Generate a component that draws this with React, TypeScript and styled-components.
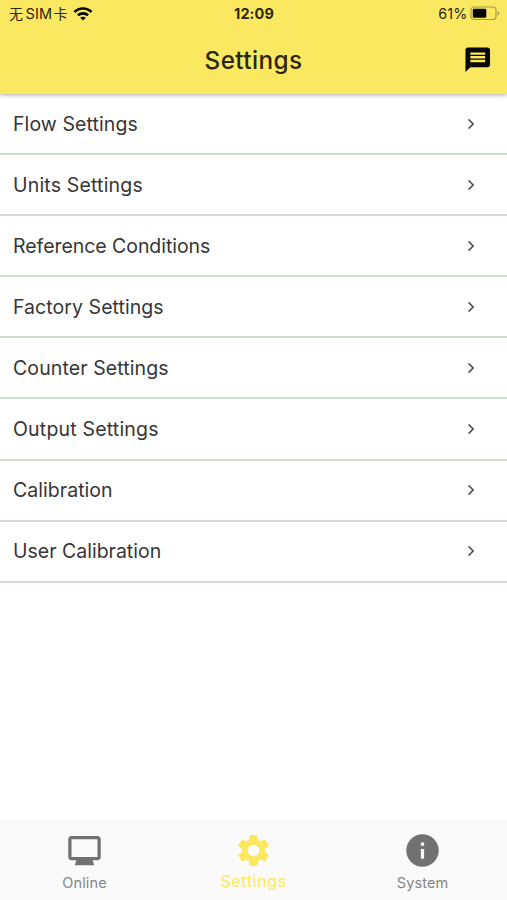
import React from "react";
import styled, { createGlobalStyle } from "styled-components";

const GlobalStyle = createGlobalStyle`
  * { box-sizing: border-box; }
  html, body { margin: 0; padding: 0; background: #fff; }
  body { font-family: Inter, "Noto Sans CJK SC", sans-serif; }
`;

const Screen = styled.div`
  width: 507px;
  height: 900px;
  display: flex;
  flex-direction: column;
  overflow: hidden;
  background: #fff;
`;

const Header = styled.header`
  flex: none;
  height: 94px;
  background: #fbe861;
  box-shadow: 0 1px 4px rgba(0, 0, 0, 0.34);
  z-index: 1;
`;

const StatusBar = styled.div`
  height: 27px;
  padding: 0 7px 0 9px;
  display: grid;
  grid-template-columns: 1fr auto 1fr;
  align-items: center;
  font-size: 14.3px;
  line-height: 27px;
  color: #2b2712;
`;

const Carrier = styled.div`
  display: flex;
  align-items: center;
  white-space: nowrap;
`;

const Hanzi = styled.span`
  font-size: 14px;
  &:first-child { margin-right: 2.5px; }
`;

const Sim = styled.span`
  margin-right: 1.5px;
  font-size: 14.5px;
  letter-spacing: 0.1px;
`;

const WifiIcon = styled.svg`
  width: 20px;
  height: 15px;
  margin-left: 5.5px;
  margin-bottom: 1px;
`;

const Clock = styled.div`
  padding-right: 1px;
  font-weight: 700;
  font-size: 14.5px;
  letter-spacing: 0.1px;
`;

const Power = styled.div`
  display: flex;
  justify-content: flex-end;
  align-items: center;
  gap: 2.5px;
  letter-spacing: 0.15px;
`;

const BatteryIcon = styled.svg`
  width: 30px;
  height: 15px;
`;

const TitleBar = styled.div`
  height: 65px;
  padding: 0 14.5px;
  display: grid;
  grid-template-columns: 1fr auto 1fr;
  align-items: center;
`;

const Title = styled.h1`
  grid-column: 2;
  margin: 0;
  font-size: 24.3px;
  line-height: 30px;
  font-weight: 500;
  letter-spacing: 0.4px;
  color: #2a2611;
`;

const IconButton = styled.button`
  justify-self: end;
  display: flex;
  padding: 0;
  border: 0;
  background: none;
  color: #080701;
`;

const Glyph = styled.svg<{ $size: number }>`
  width: ${(p) => p.$size}px;
  height: ${(p) => p.$size}px;
  fill: currentColor;
  display: block;
`;

const List = styled.main`
  flex: 1;
`;

const Row = styled.div`
  height: 61.1px;
  padding: 0 30.5px 0 13px;
  display: flex;
  align-items: center;
  justify-content: space-between;
  border-bottom: 2px solid #cbe0cb;
  color: #4c4c4c;

  svg {
    stroke: currentColor;
    stroke-width: 0.8px;
  }
`;

const RowLabel = styled.span<{ $tracking: number }>`
  font-size: 19.5px;
  line-height: 24px;
  letter-spacing: ${(p) => p.$tracking}px;
  color: #363636;
`;

const TabBar = styled.nav`
  flex: none;
  height: 80px;
  padding-top: 11.3px;
  background: #fafafa;
  display: grid;
  grid-template-columns: repeat(3, 1fr);
`;

const Tab = styled.div<{ $active?: boolean }>`
  display: flex;
  flex-direction: column;
  align-items: center;
  color: ${(p) => (p.$active ? "#fbe861" : "#717171")};
`;

const TabLabel = styled.span<{ $active?: boolean }>`
  margin-top: ${(p) => (p.$active ? 0.7 : 2.7)}px;
  font-size: ${(p) => (p.$active ? 16.5 : 14.5)}px;
  line-height: 20px;
  letter-spacing: ${(p) => (p.$active ? 0.4 : 0.12)}px;
  color: ${(p) => (p.$active ? "#fbe861" : "#858585")};
`;

const paths = {
  message:
    "M20 2H4c-1.1 0-1.99.9-1.99 2L2 22l4-4h14c1.1 0 2-.9 2-2V4c0-1.1-.9-2-2-2zm-2 12H6v-2h12v2zm0-3H6V9h12v2zm0-3H6V6h12v2z",
  chevron: "M6.49 20.13l1.77 1.77 9.9-9.9-9.9-9.9-1.77 1.77L14.62 12z",
  monitor:
    "M20 3H4c-1.1 0-2 .9-2 2v11c0 1.1.9 2 2 2h3l-1 3h12l-1-3h3c1.1 0 2-.9 2-2V5c0-1.1-.9-2-2-2zm0 13H4V5h16v11z",
  gear: "M19.14 12.94c.04-.3.06-.61.06-.94 0-.32-.02-.64-.07-.94l2.03-1.58c.18-.14.23-.41.12-.61l-1.92-3.32c-.12-.22-.37-.29-.59-.22l-2.39.96c-.5-.38-1.03-.7-1.62-.94l-.36-2.54c-.04-.24-.24-.41-.48-.41h-3.84c-.24 0-.43.17-.47.41l-.36 2.54c-.59.24-1.13.57-1.62.94l-2.39-.96c-.22-.08-.47 0-.59.22L2.74 8.87c-.12.21-.08.47.12.61l2.03 1.58c-.05.3-.09.63-.09.94s.02.64.07.94l-2.03 1.58c-.18.14-.23.41-.12.61l1.92 3.32c.12.22.37.29.59.22l2.39-.96c.5.38 1.03.7 1.62.94l.36 2.54c.05.24.24.41.48.41h3.84c.24 0 .44-.17.47-.41l.36-2.54c.59-.24 1.13-.56 1.62-.94l2.39.96c.22.08.47 0 .59-.22l1.92-3.32c.12-.22.07-.47-.12-.61l-2.01-1.58zM12 15.5c-1.93 0-3.5-1.57-3.5-3.5s1.57-3.5 3.5-3.5 3.5 1.57 3.5 3.5-1.57 3.5-3.5 3.5z",
  info: "M12 2C6.48 2 2 6.48 2 12s4.48 10 10 10 10-4.48 10-10S17.52 2 12 2zm1 15h-2v-6h2v6zm0-8h-2V7h2v2z",
};

function Icon({ name, size }: { name: keyof typeof paths; size: number }) {
  return (
    <Glyph $size={size} viewBox="0 0 24 24" aria-hidden="true">
      <path d={paths[name]} />
    </Glyph>
  );
}

const items = [
  { label: "Flow Settings", tracking: 0.09 },
  { label: "Units Settings", tracking: 0.18 },
  { label: "Reference Conditions", tracking: -0.05 },
  { label: "Factory Settings", tracking: 0.06 },
  { label: "Counter Settings", tracking: 0.1 },
  { label: "Output Settings", tracking: 0.19 },
  { label: "Calibration", tracking: 0.04 },
  { label: "User Calibration", tracking: 0 },
];

const tabs: { label: string; icon: keyof typeof paths; active?: boolean }[] = [
  { label: "Online", icon: "monitor" },
  { label: "Settings", icon: "gear", active: true },
  { label: "System", icon: "info" },
];

export default function App() {
  return (
    <>
      <GlobalStyle />
      <Screen>
        <Header>
          <StatusBar>
            <Carrier>
              <Hanzi>无</Hanzi>
              <Sim>SIM</Sim>
              <Hanzi>卡</Hanzi>
              <WifiIcon viewBox="0 0 20 15" fill="none" stroke="#080701" strokeWidth="2.7">
                <path d="M1.5 6C6.2 1.3 13.8 1.3 18.5 6" />
                <path d="M4.9 9.4C7.7 6.6 12.3 6.6 15.1 9.4" />
                <path d="M10 14.6L7.2 11.8C8.7 10.3 11.3 10.3 12.8 11.8Z" fill="#080701" stroke="none" />
              </WifiIcon>
            </Carrier>
            <Clock>12:09</Clock>
            <Power>
              <span>61%</span>
              <BatteryIcon viewBox="0 0 30 15">
                <rect x="1" y="1" width="25" height="12.5" rx="3" fill="none" stroke="#a79b42" strokeWidth="1.2" />
                <rect x="2.8" y="2.8" width="13.5" height="9" rx="1.4" fill="#050500" />
                <path d="M27.5 5v4.5C29.8 8.7 29.8 5.8 27.5 5Z" fill="#a79b42" />
              </BatteryIcon>
            </Power>
          </StatusBar>
          <TitleBar>
            <Title>Settings</Title>
            <IconButton aria-label="Messages">
              <Icon name="message" size={29.5} />
            </IconButton>
          </TitleBar>
        </Header>
        <List>
          {items.map((item) => (
            <Row key={item.label}>
              <RowLabel $tracking={item.tracking}>{item.label}</RowLabel>
              <Icon name="chevron" size={12} />
            </Row>
          ))}
        </List>
        <TabBar>
          {tabs.map((tab) => (
            <Tab key={tab.label} $active={tab.active}>
              <Icon name={tab.icon} size={39} />
              <TabLabel $active={tab.active}>{tab.label}</TabLabel>
            </Tab>
          ))}
        </TabBar>
      </Screen>
    </>
  );
}
